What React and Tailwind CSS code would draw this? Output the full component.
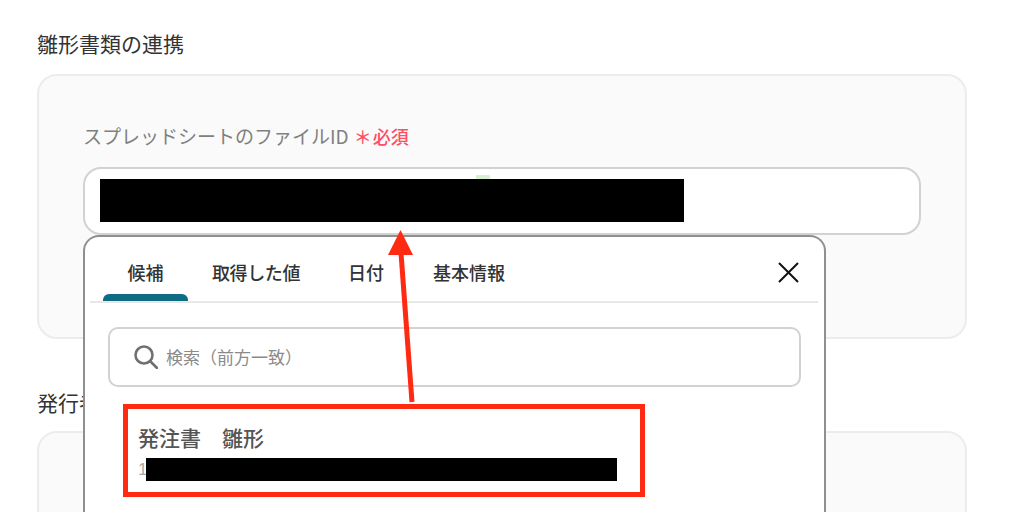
import React from "react";

const tabs = ["候補", "取得した値", "日付", "基本情報"];

function SuggestPopup() {
  return (
    <div className="absolute left-0 top-[68px] w-[743px] h-[300px] bg-white rounded-t-[16px] border-x-2 border-t-2 border-[#8f8f8f] pl-[5px]">
      <div className="relative flex w-[728px] h-[66px] border-b-2 border-[#e8e8e8] text-[#333] text-[18px] font-medium">
        <div className="w-[85px] ml-[13px] pt-[23px] text-center leading-[24px]">{tabs[0]}</div>
        <div className="absolute left-[13px] bottom-0 w-[85px] h-[7px] bg-[#0f6c85] rounded-t-[6px]"></div>
        <div className="ml-[24px] pt-[23px] leading-[24px] tracking-[-0.4px]">{tabs[1]}</div>
        <div className="ml-[48px] pt-[23px] leading-[24px]">{tabs[2]}</div>
        <div className="ml-[49px] pt-[23px] leading-[24px]">{tabs[3]}</div>
        <svg className="absolute left-[688px] top-[25px] w-[21px] h-[21px]" viewBox="0 0 21 21" fill="none" stroke="#111" strokeWidth="2">
          <path d="M1 1 L20 20 M20 1 L1 20" />
        </svg>
      </div>
      <div className="ml-[18px] mt-[24px] w-[693px] h-[60px] border-2 border-[#d2d2d2] rounded-[10px] flex items-center pl-[24px] text-[#8a8a8a] text-[17px]">
        <svg className="w-[24px] h-[24px]" viewBox="0 0 24 24" fill="none" stroke="#707070" strokeWidth="2.6" strokeLinecap="round">
          <circle cx="10" cy="10" r="8.5" />
          <path d="M16.5 16.5 L23 23" />
        </svg>
        <span className="ml-[8px]">検索（前方一致）</span>
      </div>
      <div className="ml-[48px] mt-[37px] text-[21px] leading-[26px] font-medium text-[#555]">発注書　雛形</div>
      <div className="ml-[48px] mt-[8px] flex items-center h-[23px] text-[17px] text-[#aaa] font-['Liberation_Sans',sans-serif]">
        <span className="w-[8px] overflow-hidden">1</span>
        <div className="w-[471px] h-[23px] bg-black"></div>
      </div>
    </div>
  );
}

export default function App() {
  return (
    <div className="relative w-[1010px] h-[512px] overflow-hidden bg-white pl-[37px] font-['Noto_Sans_CJK_JP','Noto_Sans',sans-serif]">
      <h2 className="pt-[29px] text-[21px] leading-[28px] text-[#333] font-normal">雛形書類の連携</h2>
      <div className="mt-[17px] w-[930px] h-[265px] bg-[#fafafa] border-2 border-[#ececec] rounded-[20px] pl-[44px] pt-[46px]">
        <div className="flex items-center h-[28px] text-[19px] text-[#808080] whitespace-nowrap">
          スプレッドシートのファイルID
          <span className="ml-[5px] text-[18px] leading-[28px] text-[#ff4d63] font-medium">＊</span>
          <span className="ml-[1px] text-[18px] font-medium text-[#ff4d63]">必須</span>
        </div>
        <div className="relative mt-[17px] w-[838px]">
          <div className="h-[68px] bg-white border-2 border-[#d2d2d2] rounded-[18px] pl-[15px] pt-[6px]">
            <div className="ml-[376px] w-[14px] h-[4px] bg-[#d8efd2]"></div>
            <div className="w-[584px] h-[43px] bg-black"></div>
          </div>
          <SuggestPopup />
        </div>
      </div>
      <h2 className="mt-[49px] text-[21px] leading-[28px] text-[#333] font-normal">発行者情報</h2>
      <div className="mt-[15px] w-[930px] h-[120px] bg-[#fafafa] border-2 border-[#ececec] rounded-[20px]"></div>

      {/* 赤枠と矢印 */}
      <div className="absolute left-[123px] top-[404px] w-[522px] h-[93px] border-[5px] border-[#ff2a12]"></div>
      <svg className="absolute left-[380px] top-[225px] w-[45px] h-[180px]" viewBox="0 0 45 180" fill="none">
        <path d="M20.5 5 L33 30 L8 30 Z" fill="#ff2a12" />
        <path d="M21 28 L32 177" stroke="#ff2a12" strokeWidth="5" />
      </svg>
    </div>
  );
}
